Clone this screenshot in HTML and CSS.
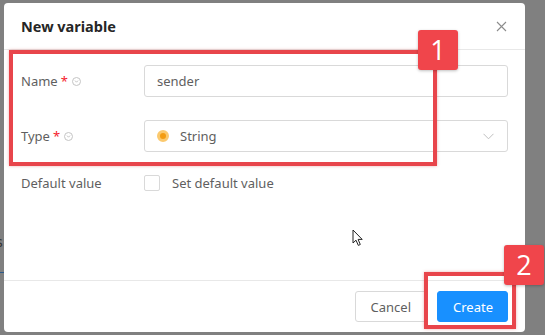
FILE: index.html
```html
<!DOCTYPE html>
<html lang="en">
<head>
    <meta charset="UTF-8">
    <meta name="viewport" content="width=device-width, initial-scale=1.0">
    <title>New variable</title>
    <link rel="stylesheet" href="styles.css">
</head>
<body>

    <div class="backdrop-bits">
        <span class="peek-text">s</span>
        <span class="peek-line"></span>
    </div>

    <div class="modal">
        <div class="modal-header">
            <h3>New variable</h3>
            <svg class="close" width="11" height="11" viewBox="0 0 11 11">
                <path d="M1 1L10 10M10 1L1 10" stroke="#8c8c8c" stroke-width="1.1" fill="none"/>
            </svg>
        </div>

        <div class="modal-body">
            <div class="form-row">
                <label class="form-label">Name <span class="req">*</span>
                    <svg class="help" width="9" height="9" viewBox="0 0 9 9"><circle cx="4.5" cy="4.5" r="4" stroke="#c4c4c4" fill="none"/><path d="M3 3.6L4.5 5.2L6 3.6" stroke="#c4c4c4" fill="none"/></svg>
                </label>
                <div class="input">sender</div>
            </div>

            <div class="form-row">
                <label class="form-label">Type <span class="req">*</span>
                    <svg class="help" width="9" height="9" viewBox="0 0 9 9"><circle cx="4.5" cy="4.5" r="4" stroke="#c4c4c4" fill="none"/><path d="M3 3.6L4.5 5.2L6 3.6" stroke="#c4c4c4" fill="none"/></svg>
                </label>
                <div class="input select">
                    <span class="type-dot"></span>
                    <span class="select-value">String</span>
                    <svg class="chevron" width="11" height="7" viewBox="0 0 11 7"><path d="M0.5 0.8L5.5 5.8L10.5 0.8" stroke="#bfbfbf" fill="none"/></svg>
                </div>
            </div>

            <div class="form-row check-row">
                <label class="form-label">Default value</label>
                <span class="checkbox"></span>
                <span class="check-text">Set default value</span>
            </div>
        </div>

        <div class="modal-footer">
            <button class="btn">Cancel</button>
            <button class="btn btn-primary">Create</button>
        </div>
    </div>

    <!-- annotations drawn over the screenshot -->
    <div class="mark mark-1"></div>
    <div class="badge badge-1">1</div>
    <div class="mark mark-2"></div>
    <div class="badge badge-2">2</div>

    <svg class="cursor" width="12" height="18" viewBox="0 0 12 18">
        <path d="M1 1L1 14L4 11.2L6.3 16.4L8.3 15.5L6.1 10.4L10.2 10.4Z" fill="#fff" stroke="#222" stroke-width="1" stroke-linejoin="round"/>
    </svg>

</body>
</html>
```

FILE: styles.css
```css
body {
    margin: 0;
    width: 545px;
    height: 335px;
    overflow: hidden;
    background: #808080;
    font-family: "Noto Sans", "Open Sans", Arial, sans-serif;
    position: relative;
}

.backdrop-bits .peek-text {
    position: absolute;
    left: -4px;
    top: 232px;
    font-size: 14px;
    color: #333;
}

.backdrop-bits .peek-line {
    position: absolute;
    left: 0;
    top: 272px;
    width: 4px;
    height: 1px;
    background: #2d5b8a;
}

.modal {
    margin: 3px 0 0 4px;
    width: 521px;
    height: 329px;
    background: #fff;
    border-radius: 4px;
    display: flex;
    flex-direction: column;
}

.modal-header {
    height: 46px;
    border-bottom: 1px solid #e8e8e8;
    display: flex;
    align-items: center;
    justify-content: space-between;
    padding: 0 18px 0 17px;
}

.modal-header h3 {
    margin: 0;
    font-size: 14.5px;
    font-weight: bold;
    color: #262626;
}

.modal-body {
    flex: 1;
    padding: 15px 17px 0 17px;
}

.form-row {
    display: flex;
    align-items: center;
    height: 32px;
    margin-bottom: 23px;
}

.form-label {
    width: 123px;
    font-size: 13px;
    color: #5f5f5f;
    display: flex;
    align-items: center;
}

.req {
    color: #f5222d;
    margin: 0 4px 0 3px;
}

.help {
    margin-top: 1px;
}

.input {
    flex: 1;
    height: 30px;
    border: 1px solid #d9d9d9;
    border-radius: 3px;
    display: flex;
    align-items: center;
    padding: 0 12px;
    font-size: 13px;
    color: #5f5f5f;
}

.type-dot {
    width: 6px;
    height: 6px;
    border-radius: 50%;
    background: #f39c12;
    border: 3px solid #fbc96e;
    margin-right: 11px;
}

.select-value {
    flex: 1;
}

.chevron {
    margin-right: 1px;
}

.check-row {
    height: 16px;
    margin-top: 2px;
}

.checkbox {
    width: 14px;
    height: 14px;
    border: 1px solid #d9d9d9;
    border-radius: 2px;
    margin-right: 12px;
}

.check-text {
    font-size: 13px;
    color: #5f5f5f;
}

.modal-footer {
    border-top: 1px solid #e8e8e8;
    height: 51px;
    display: flex;
    justify-content: flex-end;
    align-items: center;
    gap: 10px;
    padding: 0 17px;
}

.btn {
    height: 31px;
    padding: 0 15px;
    border: 1px solid #d9d9d9;
    border-radius: 3px;
    background: #fff;
    color: #5f5f5f;
    font-family: inherit;
    font-size: 13px;
}

.btn-primary {
    width: 71px;
    background: #1890ff;
    border-color: #1890ff;
    color: #fff;
}

.mark {
    position: absolute;
    border: 4px solid #e8454b;
    box-shadow: 0 0 3px rgba(200, 40, 40, 0.35);
}

.mark-1 {
    left: 9px;
    top: 50px;
    width: 420px;
    height: 108px;
}

.mark-2 {
    left: 424px;
    top: 272px;
    width: 84px;
    height: 49px;
}

.badge {
    position: absolute;
    width: 40px;
    height: 40px;
    background: #f0454b;
    border-radius: 3px;
    color: #fff;
    font-family: "Open Sans", Arial, sans-serif;
    font-size: 27px;
    line-height: 40px;
    text-align: center;
    box-shadow: 0 1px 3px rgba(0, 0, 0, 0.25);
}

.badge-1 {
    left: 418px;
    top: 30px;
}

.badge-2 {
    left: 504px;
    top: 245px;
}

.cursor {
    position: absolute;
    left: 352px;
    top: 229px;
}
```
